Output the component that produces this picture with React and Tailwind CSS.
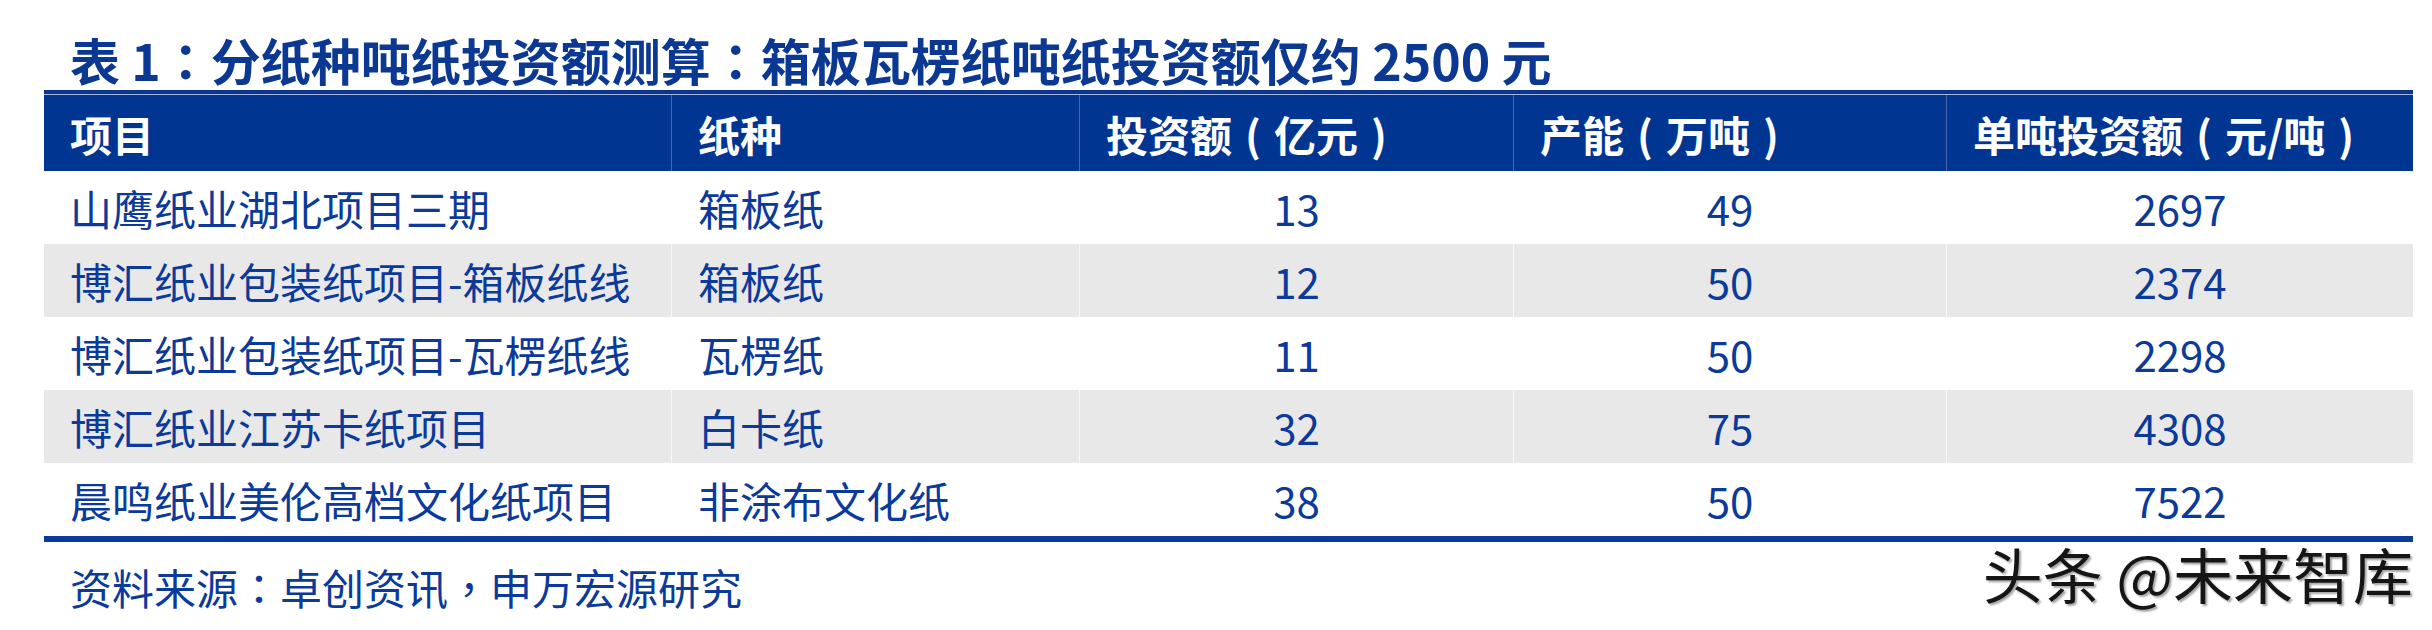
import React from 'react';

const rows = [
  ['山鹰纸业湖北项目三期', '箱板纸', '13', '49', '2697'],
  ['博汇纸业包装纸项目-箱板纸线', '箱板纸', '12', '50', '2374'],
  ['博汇纸业包装纸项目-瓦楞纸线', '瓦楞纸', '11', '50', '2298'],
  ['博汇纸业江苏卡纸项目', '白卡纸', '32', '75', '4308'],
  ['晨鸣纸业美伦高档文化纸项目', '非涂布文化纸', '38', '50', '7522'],
];

// centered full-width punctuation (TC font puts ： and ， in the middle of the cell)
const P = ({ children }) => (
  <span className="font-['Noto_Sans_CJK_TC',sans-serif]">{children}</span>
);

// full-width cell with the bracket sitting in its middle
const B = ({ children }) => (
  <span className="inline-block w-[1em] text-center">{children}</span>
);

const headers = [
  <>项目</>,
  <>纸种</>,
  <>投资额<B>(</B>亿元<B>)</B></>,
  <>产能<B>(</B>万吨<B>)</B></>,
  <>单吨投资额<B>(</B>元/吨<B>)</B></>,
];

const grid = 'grid grid-cols-[627px_408px_434px_433px_467px]';

export default function App() {
  return (
    <div className="w-[2432px] h-[630px] bg-white overflow-hidden font-['Noto_Sans_CJK_SC',sans-serif] text-[#0b3a9a]">
      <div className="ml-[44px] w-[2369px]">
        {/* title */}
        <div className="mt-[29px] h-[61px] pl-[26px] text-[50px] leading-[61px] font-bold text-[#0b3893] whitespace-nowrap">
          表 1<P>：</P>分纸种吨纸投资额测算<P>：</P>箱板瓦楞纸吨纸投资额仅约 2500 元
        </div>

        {/* header */}
        <div className="bg-[#003592]">
          <div className="h-[4px] bg-[#0a3690]" />
          <div className="h-px bg-[#a7b6dc]" />
          <div className={`${grid} h-[76px]`}>
            {headers.map((h, i) => (
              <div
                key={i}
                className={`flex items-center pl-[26px] text-[42px] font-bold text-white whitespace-nowrap ${i > 0 ? 'border-l border-[#4a66b0]' : ''}`}
              >
                <span>{h}</span>
              </div>
            ))}
          </div>
        </div>

        {/* body */}
        {rows.map((r, ri) => (
          <div key={r[0]} className={`${grid} h-[73px] ${ri % 2 === 1 ? 'bg-[#e8e8e8]' : 'bg-white'}`}>
            {r.map((c, ci) => (
              <div
                key={ci}
                className={`flex items-center text-[42px] whitespace-nowrap ${ci < 2 ? 'pl-[26px]' : 'justify-center'} ${ci > 0 ? 'border-l border-white/70' : ''}`}
              >
                {c}
              </div>
            ))}
          </div>
        ))}
        <div className="h-[6px] bg-[#0a3a9c]" />

        {/* source + watermark */}
        <div className="relative pt-[20px]">
          <div className="pl-[26px] text-[42px] leading-[50px] whitespace-nowrap">
            资料来源<P>：</P>卓创资讯<P>，</P>申万宏源研究
          </div>
          <div className="absolute right-0 top-[-5px] text-[60px] leading-[72px] text-[#151515] whitespace-nowrap [text-shadow:2px_2px_2px_rgba(0,0,0,0.35)]">
            头条 @未来智库
          </div>
        </div>
      </div>
    </div>
  );
}
